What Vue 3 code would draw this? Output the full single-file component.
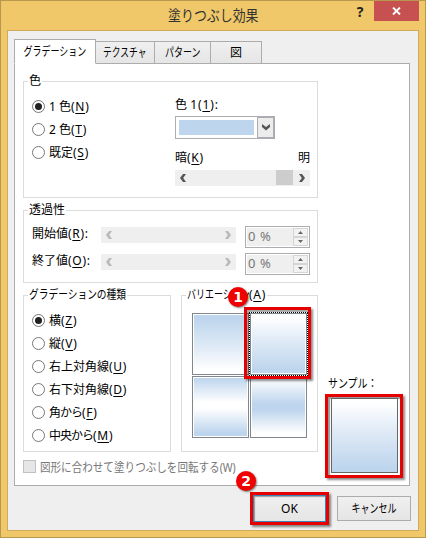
<template>
  <div class="dialog">
    <header class="titlebar">
      <h1>塗りつぶし効果</h1>
      <span class="help">?</span>
      <button class="close" type="button">
        <svg width="9" height="8" viewBox="0 0 9 8"><path d="M1 .5 8 7.5M8 .5 1 7.5" stroke="#fff" stroke-width="1.9" /></svg>
      </button>
    </header>

    <div class="client">
      <nav class="tabs">
        <button
          v-for="(tab, i) in tabs"
          :key="tab.label"
          type="button"
          :class="['tab', tab.name, { active: activeTab === i }]"
          @click="activeTab = i"
        ><span>{{ tab.label }}</span></button>
      </nav>

      <div class="panel">
        <section class="group colors">
          <h2>色</h2>
          <div class="radios">
            <label v-for="o in colorModes" :key="o.key" class="option" @click="colorMode = o.key">
              <i :class="['radio', { on: colorMode === o.key }]"></i>
              <span>{{ o.label }}<span class="key">(<u>{{ o.key }}</u>)</span></span>
            </label>
          </div>
          <div class="picker">
            <div class="caption">色 <span class="key wide">1(<u>1</u>):</span></div>
            <div class="combo">
              <div class="color"></div>
              <div class="drop">
                <svg width="8" height="7" viewBox="0 0 8 7"><path d="M0 0 4 3 8 0V3L4 6.5 0 3Z" fill="#555" /></svg>
              </div>
            </div>
            <div class="range"><span>暗<span class="key">(<u>K</u>)</span></span><span>明</span></div>
            <div class="scrollbar">
              <svg width="6" height="8" viewBox="0 0 6 8"><path d="M3 0H6L3.2 4 6 8H3L0 4Z" fill="#555" /></svg>
              <i class="thumb"></i>
              <svg width="6" height="8" viewBox="0 0 6 8"><path d="M3 0H0L2.8 4 0 8H3L6 4Z" fill="#555" /></svg>
            </div>
          </div>
        </section>

        <section class="group transparency">
          <h2>透過性</h2>
          <div v-for="row in transparency" :key="row.key" class="row">
            <span class="row-label">{{ row.label }}<span class="key">(<u>{{ row.key }}</u>):</span></span>
            <div class="scrollbar off">
              <svg width="6" height="8" viewBox="0 0 6 8"><path d="M3 0H6L3.2 4 6 8H3L0 4Z" fill="#b9b9b9" /></svg>
              <svg width="6" height="8" viewBox="0 0 6 8"><path d="M3 0H0L2.8 4 0 8H3L6 4Z" fill="#b9b9b9" /></svg>
            </div>
            <div class="spinner">
              <span class="value">{{ row.value }} %</span>
              <div class="steps">
                <i><svg width="5" height="3" viewBox="0 0 5 3"><path d="M0 3 2.5 0 5 3Z" fill="#666" /></svg></i>
                <i><svg width="5" height="3" viewBox="0 0 5 3"><path d="M0 0 2.5 3 5 0Z" fill="#666" /></svg></i>
              </div>
            </div>
          </div>
        </section>

        <div class="lower">
          <section class="group styles">
            <h2><span class="styles-title">グラデーションの種類</span></h2>
            <div class="radios">
              <label v-for="o in shadingStyles" :key="o.key" class="option" @click="shading = o.key">
                <i :class="['radio', { on: shading === o.key }]"></i>
                <span><span :class="{ tight: o.kana }">{{ o.label }}</span><span class="key">(<u>{{ o.key }}</u>)</span></span>
              </label>
            </div>
          </section>

          <section class="group variants">
            <h2><span class="variants-title">バリエーション</span><span class="key">(<u>A</u>)</span></h2>
            <div class="grid">
              <div
                v-for="n in 4"
                :key="n"
                :class="['variant', 'v' + n, { selected: variant === n }]"
                @click="variant = n"
              ><i></i></div>
            </div>
            <i class="mark mark-variant"></i>
            <b class="badge badge-1">1</b>
          </section>

          <section class="sample">
            <div class="sample-title"><span>サンプル：</span></div>
            <div class="preview"><i></i></div>
          </section>
        </div>

        <label class="rotate"><i></i><span>図形に合わせて塗りつぶしを回転する(W)</span></label>
      </div>

      <footer class="actions">
        <div class="ok-wrap">
          <button class="btn ok" type="button">OK</button>
          <b class="badge badge-2">2</b>
        </div>
        <button class="btn cancel" type="button"><span>キャンセル</span></button>
      </footer>
    </div>
  </div>
</template>

<script setup>
import { ref } from 'vue'

const tabs = [
  { label: 'グラデーション', name: 'gradient' },
  { label: 'テクスチャ', name: 'texture' },
  { label: 'パターン', name: 'pattern' },
  { label: '図', name: 'picture' },
]
const activeTab = ref(0)

const colorModes = [
  { label: '1 色', key: 'N' },
  { label: '2 色', key: 'T' },
  { label: '既定', key: 'S' },
]
const colorMode = ref('N')

const transparency = ref([
  { label: '開始値', key: 'R', value: 0 },
  { label: '終了値', key: 'O', value: 0 },
])

const shadingStyles = [
  { label: '横', key: 'Z' },
  { label: '縦', key: 'V' },
  { label: '右上対角線', key: 'U' },
  { label: '右下対角線', key: 'D' },
  { label: '角から', key: 'F', kana: true },
  { label: '中央から', key: 'M', kana: true },
]
const shading = ref('Z')
const variant = ref(2)
</script>

<style>
body {
  margin: 0;
}
</style>

<style scoped>
* {
  box-sizing: border-box;
}

.dialog {
  width: 426px;
  height: 538px;
  padding: 0 6px;
  border: 1px solid #b8984f;
  background: #f0c869;
  font-family: "Noto Sans", "Noto Sans CJK JP", sans-serif;
  font-size: 12px;
  line-height: 16px;
  color: #000;
  white-space: nowrap;
}

button {
  font: inherit;
  color: inherit;
  padding: 0;
  margin: 0;
}

svg {
  display: block;
}

u {
  text-underline-offset: 2px;
  text-decoration-thickness: 1px;
}

.key {
  letter-spacing: 0.7px;
}

.key.wide {
  letter-spacing: 0.9px;
}

.titlebar {
  display: flex;
  height: 29px;
}

.titlebar h1 {
  width: 105px;
  margin: 4px 0 0 161px;
  font-size: 15px;
  line-height: 20px;
  font-weight: 400;
  color: #333;
  transform: scaleX(0.86);
  transform-origin: left;
}

.help {
  width: 20px;
  margin: 1px 0 0 77px;
  text-align: center;
  font-size: 14px;
  line-height: 20px;
  font-weight: 700;
  color: #222;
}

.close {
  display: flex;
  align-items: center;
  justify-content: center;
  width: 45px;
  height: 20px;
  margin-left: 4px;
  border: 0;
  background: #c75050;
}

.client {
  width: 412px;
  height: 501px;
  padding: 8px 8px 0 6px;
  border: 1px solid #cfaa58;
  background: #efefef;
}

.tabs {
  display: flex;
  align-items: flex-end;
  height: 25px;
}

.tab {
  height: 23px;
  margin-left: -1px;
  border: 1px solid #acacac;
  background: linear-gradient(#f0f0f0, #e5e5e5);
}

.tab span,
.sample-title span,
.cancel span {
  display: inline-block;
  transform: scaleX(0.75);
  margin: 0 -20px;
}

.gradient { width: 82px; margin-left: 0; }
.texture { width: 60px; }
.pattern { width: 57px; }
.picture { width: 52px; }

.tab.texture span {
  transform: scaleX(0.73);
}

.tab.picture span {
  transform: none;
}

.tab.active {
  position: relative;
  z-index: 1;
  height: 25px;
  border-bottom-color: #fff;
  background: #fff;
}

.panel {
  width: 396px;
  height: 423px;
  margin-top: -1px;
  padding: 17px 0 0 8px;
  border: 1px solid #acacac;
  background: #fff;
}

.group {
  position: relative;
  width: 295px;
  border: 1px solid #dcdcdc;
}

.group h2 {
  position: absolute;
  display: flex;
  left: 4px;
  top: -9px;
  margin: 0;
  padding: 0 1px;
  background: #fff;
  font-size: 12px;
  line-height: 16px;
  font-weight: 400;
}

.styles-title {
  width: 97px;
  transform: scaleX(0.81);
  transform-origin: left;
}

.variants-title {
  width: 62px;
  transform: scaleX(0.75);
  transform-origin: left;
}

.colors {
  display: flex;
  height: 117px;
  padding: 13px 7px 0 8px;
}

.radios {
  display: flex;
  flex-direction: column;
}

.option {
  display: flex;
  align-items: center;
  gap: 4px;
  height: 23px;
}

.radio {
  display: flex;
  align-items: center;
  justify-content: center;
  width: 13px;
  height: 13px;
  border: 1px solid #777;
  border-radius: 50%;
  background: #fff;
}

.radio.on::after {
  content: "";
  width: 7px;
  height: 7px;
  border-radius: 50%;
  background: #222;
}

.tight {
  letter-spacing: -1px;
}

.picker {
  width: 135px;
  margin-left: auto;
}

.caption {
  height: 21px;
  padding-top: 2px;
}

.combo {
  display: flex;
  width: 100px;
  height: 23px;
  border: 1px solid #abadb3;
  background: #fff;
}

.color {
  width: 75px;
  height: 15px;
  margin: 3px;
  background: #bdd5ed;
}

.drop {
  display: flex;
  align-items: center;
  justify-content: center;
  width: 17px;
  border: 1px solid #abadb3;
  background: #ececec;
}

.range {
  display: flex;
  justify-content: space-between;
  height: 31px;
  padding-top: 11px;
}

.scrollbar {
  display: flex;
  align-items: center;
  width: 135px;
  height: 16px;
  padding: 0 5px;
  background: #efefef;
}

.thumb {
  width: 17px;
  height: 15px;
  margin: 0 6px 1px auto;
  background: #cdcdcd;
}

.scrollbar.off {
  justify-content: space-between;
}

.transparency {
  height: 73px;
  margin-top: 12px;
  padding: 15px 7px 0 8px;
}

.row {
  display: flex;
  height: 27px;
}

.row-label {
  width: 69px;
}

.row .scrollbar {
  margin: 1px 9px 0 0;
}

.spinner {
  display: flex;
  width: 65px;
  height: 22px;
  padding: 1px;
  border: 1px solid #abadb3;
  background: #fff;
}

.value {
  width: 46px;
  height: 18px;
  padding-left: 1px;
  font-size: 13px;
  line-height: 17px;
  letter-spacing: 0.6px;
  background: #efefef;
  color: #777;
}

.steps {
  display: grid;
  width: 15px;
  height: 18px;
}

.steps i {
  display: flex;
  align-items: center;
  justify-content: center;
  border: 1px solid #d5d5d5;
  background: #f2f2f2;
}

.lower {
  display: flex;
  height: 157px;
  margin-top: 12px;
}

.styles {
  width: 148px;
  height: 157px;
  padding: 13px 0 0 8px;
}

.variants {
  width: 137px;
  height: 157px;
  margin-left: 10px;
  padding: 17px 0 0 10px;
}

.grid {
  display: grid;
  grid-template-columns: 57px 57px;
  grid-template-rows: 62px 62px;
  gap: 1px;
}

.variant {
  padding: 1px;
  border: 1px solid #80868e;
  background: #fff;
}

.variant i,
.preview i {
  display: block;
  height: 100%;
}

.v1 i { background: linear-gradient(#bdd5ed 5%, #dfeaf6 55%, #fff 95%); }
.v2 i, .preview i { background: linear-gradient(#fff 5%, #dfeaf6 45%, #bdd5ed 95%); }
.v3 i { background: linear-gradient(#bdd5ed, #fff 42%, #fff 52%, #bdd5ed 95%); }
.v4 i { background: linear-gradient(#fff, #bdd5ed 45%, #bdd5ed 55%, #fff 95%); }

.mark {
  position: absolute;
  border: 3px solid #e60000;
  box-shadow: 2px 2px 2px rgba(0, 0, 0, 0.45), inset 2px 2px 1px rgba(0, 0, 0, 0.35);
}

.mark-variant {
  left: 62px;
  top: 11px;
  width: 67px;
  height: 72px;
}

.variant.selected {
  outline: 1px dotted #000;
  box-shadow: 0 0 0 1px #fff;
}

.badge {
  position: absolute;
  z-index: 2;
  width: 20px;
  height: 20px;
  border-radius: 50%;
  background: #f00000;
  box-shadow: 1px 1px 2px rgba(0, 0, 0, 0.5);
  color: #fff;
  text-align: center;
  font: 700 14px/20px "DejaVu Sans", sans-serif;
}

.badge-1 {
  left: 46px;
  top: -9px;
}

.sample {
  width: 78px;
  margin-left: 7px;
  padding-top: 80px;
}

.sample-title {
  height: 19px;
  padding-top: 1px;
}

.sample-title span {
  margin-left: 3px;
  transform: scaleX(0.83);
  transform-origin: left;
}

.preview {
  position: relative;
  width: 78px;
  height: 84px;
  padding: 1px 2px 2px 3px;
  border: 3px solid #e60000;
  box-shadow: 2px 2px 2px rgba(0, 0, 0, 0.45), inset 2px 2px 1px rgba(0, 0, 0, 0.4);
}

.preview i {
  border: 1px solid #666;
}

.rotate {
  display: flex;
  gap: 4px;
  margin-top: 8px;
  color: #777;
}

.rotate i {
  width: 13px;
  height: 13px;
  border: 1px solid #c0c0c0;
  background: #e6e6e6;
}

.rotate span {
  transform: scaleX(0.88);
  transform-origin: left;
}

.actions {
  display: flex;
  justify-content: flex-end;
  gap: 8px;
  margin-top: 6px;
  margin-right: -1px;
}

.btn {
  border: 1px solid #acacac;
  background: linear-gradient(#f0f0f0, #e5e5e5);
}

.ok-wrap {
  position: relative;
  width: 79px;
  height: 33px;
  border: 3px solid #e60000;
  box-shadow: 2px 2px 2px rgba(0, 0, 0, 0.45);
}

.ok {
  width: 100%;
  height: 100%;
  border-color: #3c7fb1;
  box-shadow: inset 1px 1px 1px rgba(0, 0, 0, 0.35);
}

.badge-2 {
  left: -17px;
  top: -24px;
}

.cancel {
  width: 74px;
  height: 25px;
  margin-top: 4px;
}
</style>
